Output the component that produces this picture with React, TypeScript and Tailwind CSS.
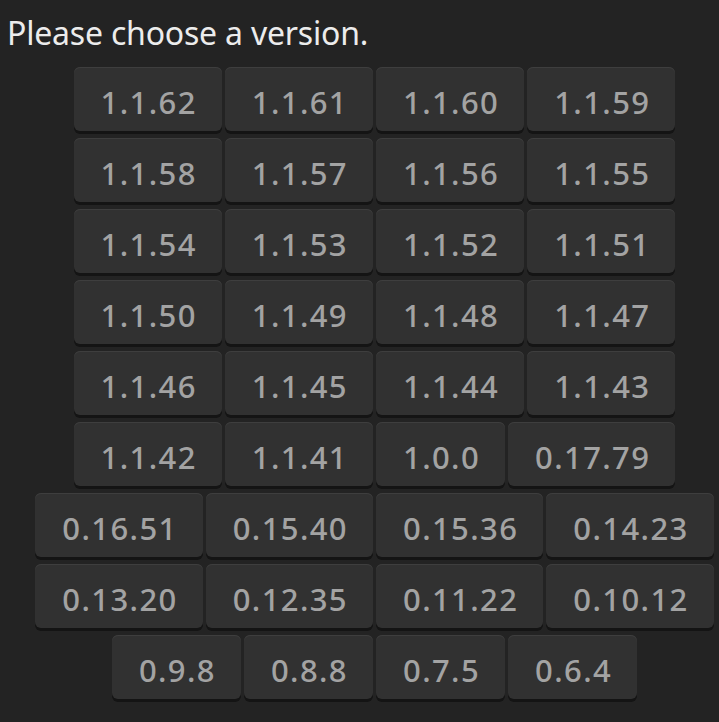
import React from "react";

const rows: string[][] = [
  ["1.1.62", "1.1.61", "1.1.60", "1.1.59"],
  ["1.1.58", "1.1.57", "1.1.56", "1.1.55"],
  ["1.1.54", "1.1.53", "1.1.52", "1.1.51"],
  ["1.1.50", "1.1.49", "1.1.48", "1.1.47"],
  ["1.1.46", "1.1.45", "1.1.44", "1.1.43"],
  ["1.1.42", "1.1.41", "1.0.0", "0.17.79"],
  ["0.16.51", "0.15.40", "0.15.36", "0.14.23"],
  ["0.13.20", "0.12.35", "0.11.22", "0.10.12"],
  ["0.9.8", "0.8.8", "0.7.5", "0.6.4"],
];

export default function App() {
  return (
    <div
      className="w-[719px] h-[722px] bg-[#232323] overflow-hidden"
      style={{ fontFamily: '"Noto Sans", sans-serif' }}
    >
      <div className="pl-[7px] pt-[10px] text-[32px] leading-[45px] text-[#ececec] tracking-[-0.2px]">
        Please choose a version.
      </div>
      <div className="pl-[30px] pt-[12px] flex flex-col gap-[4px]">
        {rows.map((r, i) => (
          <div key={i} className="flex justify-center gap-[3px]">
            {r.map((v) => (
              <button
                key={v}
                className="h-[64px] mb-[3px] pl-[27px] pr-[25px] pt-[7px] rounded-[6px] bg-[#313131] text-[#a3a3a3] text-[31px] font-medium tracking-[1.4px] leading-none shadow-[0_3px_0_#141414,inset_0_1px_0_#3e3e3e] flex items-center justify-center"
              >
                {v}
              </button>
            ))}
          </div>
        ))}
      </div>
    </div>
  );
}
